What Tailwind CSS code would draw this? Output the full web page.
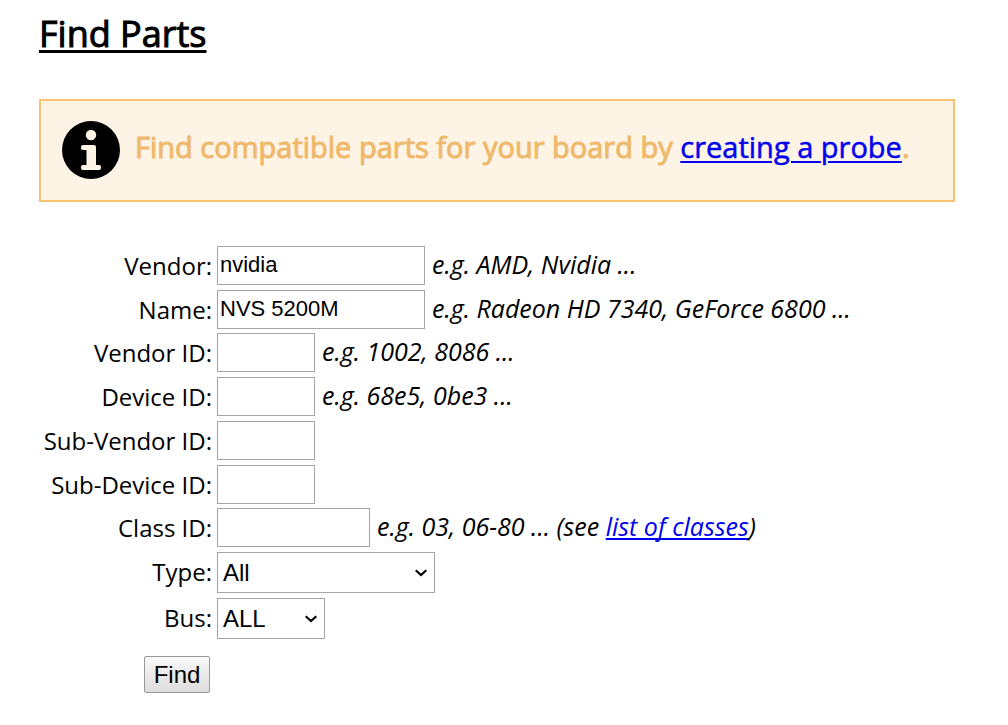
<!DOCTYPE html>
<html lang="en">
<head>
<meta charset="utf-8">
<meta name="viewport" content="width=device-width, initial-scale=1">
<title>Find Parts</title>
<script src="https://cdn.jsdelivr.net/npm/@tailwindcss/browser@4"></script>
</head>
<body class="bg-white px-[39px] pt-3 pb-8 font-['Open_Sans',sans-serif] text-black">
<h1 class="text-[36px] leading-[44px] underline decoration-3 underline-offset-3 [-webkit-text-stroke:1px] [text-decoration-skip-ink:none]">Find Parts</h1>
<section class="mt-[43px] mr-[14px] flex items-start gap-[15px] border-2 border-[#f9c270] bg-[#fef4e6] px-[21px] pt-5 pb-[21px]">
  <svg class="size-[58px] shrink-0" viewBox="0 0 58 58" aria-hidden="true">
    <circle cx="29" cy="29" r="29"/>
    <circle cx="29" cy="14" r="5.200" fill="#fef4e6"/>
    <path d="M21 24H32q2 0 2 2v18h3q2 0 2 2v1q0 2-2 2H21q-2 0-2-2v-1q0-2 2-2h3.500V29h-3.500q-2 0-2-2v-1q0-2 2-2z" fill="#fef4e6"/>
  </svg>
  <p class="pt-1.5 text-[29px] leading-10 text-[#efb96c] [-webkit-text-stroke:1px]">Find compatible parts for your board by <a href="#" class="text-[#0000ee] underline decoration-2 underline-offset-3 [-webkit-text-stroke:0.5px]">creating a probe</a>.</p>
</section>
<form class="mt-11">
  <div class="grid grid-cols-[173px_1fr] grid-rows-[44px_43px_44px_44px_44px_43px_44px_46px_46px] items-start gap-x-[5px] text-[24px] leading-10">
    <label for="vendor" class="text-right">Vendor:</label>
    <div class="flex items-start gap-[7px]"><input id="vendor" type="text" value="nvidia" class="h-[39px] w-52 border border-[#a5a5a5] px-[2px] pb-[2px] font-['Liberation_Sans',sans-serif] text-[22px]"><i class="text-[25px] leading-9">e.g. AMD, Nvidia ...</i></div>
    <label for="name" class="text-right">Name:</label>
    <div class="flex items-start gap-[7px]"><input id="name" type="text" value="NVS 5200M" class="h-[39px] w-52 border border-[#a5a5a5] px-[2px] pb-[2px] font-['Liberation_Sans',sans-serif] text-[22px]"><i class="text-[25px] leading-9">e.g. Radeon HD 7340, GeForce 6800 ...</i></div>
    <label for="vendor-id" class="text-right">Vendor ID:</label>
    <div class="flex items-start gap-[7px]"><input id="vendor-id" type="text" class="h-[39px] w-[98px] border border-[#a5a5a5] px-[2px] font-['Liberation_Sans',sans-serif] text-[22px]"><i class="text-[25px] leading-9">e.g. 1002, 8086 ...</i></div>
    <label for="device-id" class="text-right">Device ID:</label>
    <div class="flex items-start gap-[7px]"><input id="device-id" type="text" class="h-[39px] w-[98px] border border-[#a5a5a5] px-[2px] font-['Liberation_Sans',sans-serif] text-[22px]"><i class="text-[25px] leading-9">e.g. 68e5, 0be3 ...</i></div>
    <label for="sub-vendor-id" class="text-right">Sub-Vendor ID:</label>
    <div class="flex"><input id="sub-vendor-id" type="text" class="h-[39px] w-[98px] border border-[#a5a5a5] px-[2px] font-['Liberation_Sans',sans-serif] text-[22px]"></div>
    <label for="sub-device-id" class="text-right">Sub-Device ID:</label>
    <div class="flex"><input id="sub-device-id" type="text" class="h-[39px] w-[98px] border border-[#a5a5a5] px-[2px] font-['Liberation_Sans',sans-serif] text-[22px]"></div>
    <label for="class-id" class="text-right">Class ID:</label>
    <div class="flex items-start gap-[7px]"><input id="class-id" type="text" class="h-[39px] w-[153px] border border-[#a5a5a5] px-[2px] font-['Liberation_Sans',sans-serif] text-[22px]"><i class="text-[25px] leading-9">e.g. 03, 06-80 ... (see <a href="#" class="text-[#0000ee] underline decoration-2 underline-offset-2 [text-decoration-skip-ink:none]">list of classes</a>)</i></div>
    <label for="type" class="text-right">Type:</label>
    <div class="relative w-[218px]">
      <select id="type" class="block h-[41px] w-full appearance-none border border-[#a5a5a5] bg-white px-[5px] font-['Liberation_Sans',sans-serif] text-[24px]"><option>All</option></select>
      <svg class="pointer-events-none absolute top-[17px] right-2 h-2 w-3" viewBox="0 0 12 8" fill="none" stroke="#000" stroke-width="2.200" aria-hidden="true"><path d="M.7 1.200 6 6 11.300 1.200"/></svg>
    </div>
    <label for="bus" class="text-right">Bus:</label>
    <div class="relative w-[108px]">
      <select id="bus" class="block h-[41px] w-full appearance-none border border-[#a5a5a5] bg-white px-[5px] font-['Liberation_Sans',sans-serif] text-[24px]"><option>ALL</option></select>
      <svg class="pointer-events-none absolute top-[17px] right-2 h-2 w-3" viewBox="0 0 12 8" fill="none" stroke="#000" stroke-width="2.200" aria-hidden="true"><path d="M.7 1.200 6 6 11.300 1.200"/></svg>
    </div>
  </div>
  <button type="submit" class="mt-3 ml-[105px] block h-[37px] w-[66px] rounded-xs border border-[#999] bg-linear-to-b from-[#f8f8f8] to-[#dddddd] font-['Liberation_Sans',sans-serif] text-[24px] leading-8">Find</button>
</form>
</body>
</html>
